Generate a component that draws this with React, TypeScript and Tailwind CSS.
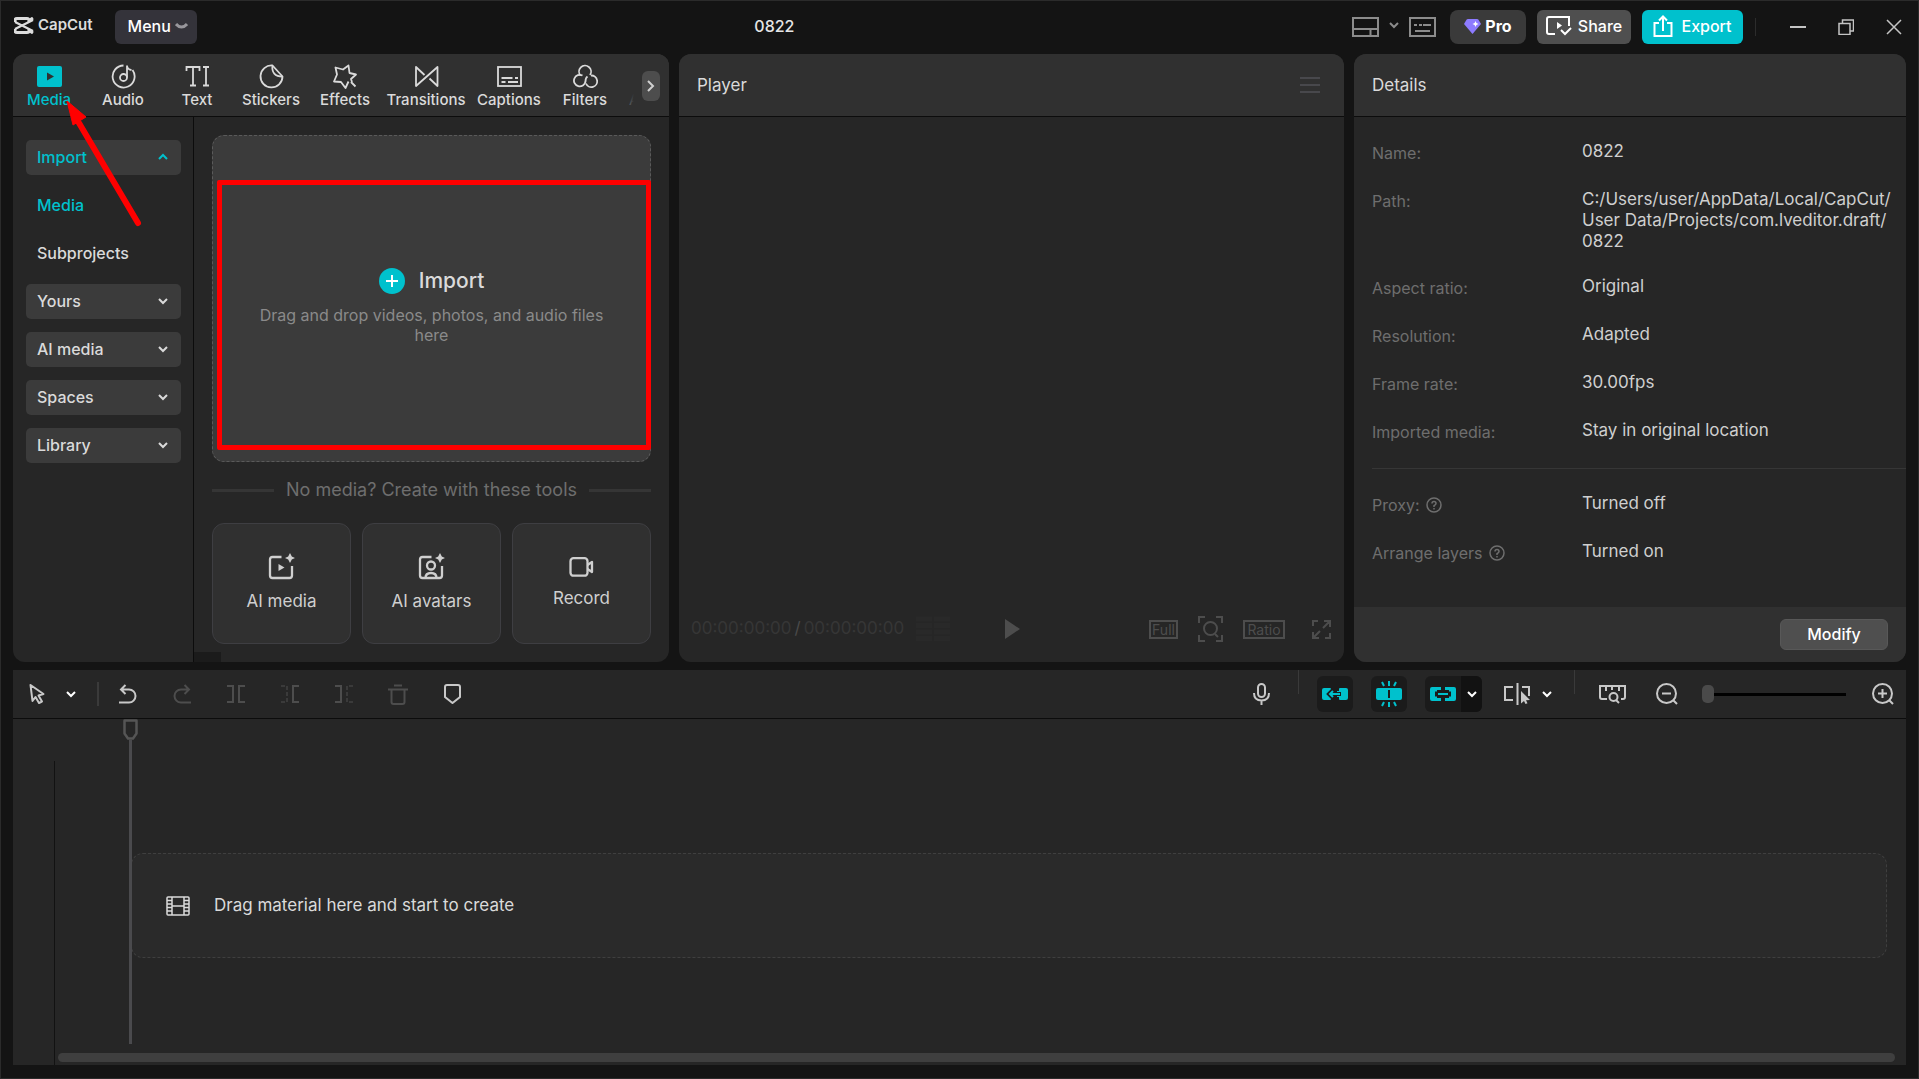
import React, { useState } from 'react';

type IconProps = { w?: number; h?: number; sw?: number; className?: string; children: React.ReactNode };

const Icon = ({ w = 24, h = 24, sw = 2, className = '', children }: IconProps) => (
  <svg
    width={w}
    height={h}
    viewBox={`0 0 ${w} ${h}`}
    fill="none"
    stroke="currentColor"
    strokeWidth={sw}
    className={`shrink-0 ${className}`}
    aria-hidden="true"
  >
    {children}
  </svg>
);

const Chevron = ({ up = false, className = '' }: { up?: boolean; className?: string }) => (
  <Icon w={12} h={8} className={className}>
    <path d={up ? 'M2 6l4-4 4 4' : 'M2 2l4 4 4-4'} />
  </Icon>
);

const tabs = [
  {
    name: 'Media',
    width: 'w-[60px]',
    icon: (
      <>
        <rect x="0" y="2" width="25" height="21" rx="2" fill="currentColor" stroke="none" />
        <path d="M10 8.500v8l7-4z" fill="#303030" stroke="none" />
      </>
    ),
  },
  {
    name: 'Audio',
    width: 'w-[60px]',
    icon: (
      <>
        <path d="M12.500 1.500A11 11 0 1 0 21.500 6" />
        <circle cx="12.500" cy="13.500" r="3.500" />
        <path d="M16 13.500V1.500c0 3 1.500 4 4.500 4.500" />
      </>
    ),
  },
  {
    name: 'Text',
    width: 'w-[60px]',
    icon: (
      <>
        <path d="M1.500 7V3h13v4M8 3v18.500M5 21.500h6" />
        <path d="M18 3h6M21 3v18.500M18 21.500h6" />
      </>
    ),
  },
  {
    name: 'Stickers',
    width: 'w-[60px]',
    icon: (
      <>
        <path d="M13.500 1.500A11 11 0 1 0 23.500 12.500z" strokeLinejoin="round" />
        <path d="M13.500 1.500c-1 7 2.500 11 10 11" />
      </>
    ),
  },
  {
    name: 'Effects',
    width: 'w-[60px]',
    icon: (
      <path
        d="M19 18l-1-3 5-4.500-6.500-1.500L15.500 1.500l-5.500 4-7.500-2 1.500 7-3 7 7 .5 4.500 6 3-6.500M18 18l4.500 4.500"
        strokeLinejoin="round"
      />
    ),
  },
  {
    name: 'Transitions',
    width: 'w-[74px]',
    icon: <path d="M15.500 14.500L23.500 22V3L2 22V3l8.500 8" strokeLinejoin="round" />,
  },
  {
    name: 'Captions',
    width: 'w-16',
    icon: (
      <>
        <rect x="1" y="3" width="23" height="19" />
        <path d="M4.500 14h11M18 14h3M4.500 18h4M11 18h10" />
      </>
    ),
  },
  {
    name: 'Filters',
    width: 'w-[60px]',
    icon: (
      <>
        <path d="M7.500 11.500A6 6 0 1 1 17 11" />
        <path d="M9.500 11.500A5.800 5.800 0 1 0 12.500 17.500c0-3 .5-4 2-5" />
        <path d="M18 11.500a5.800 5.800 0 1 1-5 8" />
      </>
    ),
  },
];

const groups = ['Yours', 'AI media', 'Spaces', 'Library'];

const sparkle = 'M22 0l1.800 3.400L27 5l-3.200 1.600L22 10l-1.800-3.400L17 5l3.200-1.600z';

const tools = [
  {
    name: 'AI media',
    icon: (
      <>
        <path d="M13.500 4H4.500Q2 4 2 6.500v16Q2 25 4.500 25h17q2.500 0 2.500-2.500V13" />
        <path d="M10.500 11v7l6-3.500z" fill="currentColor" stroke="none" />
        <path d={sparkle} fill="currentColor" stroke="none" />
      </>
    ),
  },
  {
    name: 'AI avatars',
    icon: (
      <>
        <path d="M13.500 4H4.500Q2 4 2 6.500v16Q2 25 4.500 25h17q2.500 0 2.500-2.500V13" />
        <circle cx="13" cy="12.500" r="4" />
        <path d="M7.500 25c0-3 1.500-5 5.500-5s5.500 2 5.500 5" />
        <path d={sparkle} fill="currentColor" stroke="none" />
      </>
    ),
  },
];

const details = [
  ['Name:', '0822'],
  ['Path:', 'C:/Users/user/AppData/Local/CapCut/\nUser Data/Projects/com.lveditor.draft/\n0822'],
  ['Aspect ratio:', 'Original'],
  ['Resolution:', 'Adapted'],
  ['Frame rate:', '30.00fps'],
  ['Imported media:', 'Stay in original location'],
];

const extras = [
  ['Proxy:', 'Turned off'],
  ['Arrange layers', 'Turned on'],
];

const Header = () => (
  <header className="flex h-[53px] shrink-0 items-start pt-[9px] pl-[13px] pr-4">
    <div className="flex h-[31px] items-center gap-1 text-[#dcdcdc]">
      <Icon w={20} h={17} sw={3}>
        <path d="M1 5V3.500Q1 1.500 3 1.500h10q2 0 2 2L19 1M1 12v1.500q0 2 2 2h10q2 0 2-2l4 2.500" />
        <path d="M1 5l18 9M1 12l18-9" strokeWidth="2.200" />
      </Icon>
      <span className="text-[15px] font-semibold">CapCut</span>
    </div>
    <button className="ml-[22px] flex h-[34px] items-center gap-1 rounded-md bg-[#34333a] pb-[2px] pl-[13px] pr-[9px] text-base font-medium text-white">
      Menu
      <Icon w={13} h={8} sw={3} className="text-[#98979c]">
        <path d="M1 2q5.500 6 11 0" />
      </Icon>
    </button>
    <h1 className="flex-1 pt-[6px] text-center text-base leading-[21px] font-medium text-[#e6e6e6]">0822</h1>
    <div className="flex h-[34px] items-center">
      <button aria-label="Layout" className="flex items-center gap-[9px] text-[#8c8c8c]">
        <Icon w={27} h={20}>
          <path d="M1 1h25v18H1zM1 12h25M18.500 12v7" />
        </Icon>
        <Chevron className="mb-1" />
      </button>
      <button aria-label="Shortcuts" className="ml-[9px] text-[#8c8c8c]">
        <Icon w={27} h={20}>
          <path d="M1 1h25v18H1zM5 8h3M10 8h3M14 8h8M6 14h15" />
        </Icon>
      </button>
      <button className="ml-[14px] flex h-[34px] w-[76px] items-center justify-center gap-1 rounded-lg bg-[#3a3a3a] pb-[2px] text-base font-bold text-white">
        <svg width="17" height="15" viewBox="0 0 17 15" aria-hidden="true">
          <path d="M4 0h9q1 0 1.500.8L17 5 8.500 15 0 5 2.500.8Q3 0 4 0z" fill="#8d7bff" />
          <path d="M11.500 2l.9 2.100 2.100.9-2.100.9-.9 2.100-.9-2.100-2.100-.9 2.100-.9z" fill="#fff" />
        </svg>
        Pro
      </button>
      <button className="ml-[11px] flex h-[34px] w-[94px] items-center justify-center gap-[6px] rounded-md bg-[#4f4f4f] pb-[2px] text-base font-medium text-white">
        <Icon w={26} h={20}>
          <path d="M9 18H3q-2 0-2-2V3q0-2 2-2h20v9" />
          <path d="M11 6v7l5-3.500z" fill="currentColor" stroke="none" />
          <path d="M15 14l4 4 6-6" />
        </Icon>
        Share
      </button>
      <button className="ml-[11px] flex h-[34px] w-[101px] items-center justify-center gap-2 rounded-md bg-[#00c1cd] pb-[2px] text-base font-medium text-white">
        <Icon w={20} h={22}>
          <path d="M6 8H1.500v13h17V8H14M10 16V2M6 5.500l4-4 4 4" />
        </Icon>
        Export
      </button>
      <span className="ml-3 h-[18px] w-px bg-[#2c2c2c]" />
      <button aria-label="Minimize" className="ml-[34px] text-[#c4c4c4]">
        <Icon w={16} h={16} sw={2}>
          <path d="M0 8h16" />
        </Icon>
      </button>
      <button aria-label="Restore" className="ml-8 text-[#c4c4c4]">
        <Icon w={16} h={16} sw={1.5}>
          <path d="M1 4.500h11v11H1zM4.500 4V1h11v11H12" />
        </Icon>
      </button>
      <button aria-label="Close" className="ml-8 text-[#c4c4c4]">
        <Icon w={16} h={16} sw={1.5}>
          <path d="M1 1l14 14M15 1L1 15" />
        </Icon>
      </button>
    </div>
  </header>
);

const MediaPanel = () => {
  const [active, setActive] = useState('Media');

  return (
    <section className="flex min-w-0 flex-[656] flex-col overflow-hidden rounded-xl bg-[#262626]">
      <nav className="relative flex h-[63px] shrink-0 gap-[14px] border-b border-[#0c0c0c] bg-[#303030] pl-[6px] pt-[10px]">
        {tabs.map((tab) => (
          <button
            key={tab.name}
            onClick={() => setActive(tab.name)}
            className={`flex shrink-0 flex-col items-center gap-px text-[15px] leading-5 font-medium ${tab.width} ${
              active === tab.name ? 'text-[#00c1cd]' : 'text-[#dadada]'
            }`}
          >
            <Icon w={25} h={25} sw={1.8}>{tab.icon}</Icon>
            {tab.name}
          </button>
        ))}
        <span className="pt-[26px] text-[15px] leading-5 text-[#8a8a8a]">A</span>
        {/* fade over the tab that runs under the scroll button */}
        <div className="absolute bottom-0 right-0 top-0 flex w-[44px] items-start justify-end bg-linear-to-r from-transparent to-[#303030] to-20% pr-[9px] pt-[17px]">
          <button
            aria-label="More tabs"
            className="flex h-[30px] w-[18px] items-center justify-center rounded-md bg-[#4d4d4d] text-[#d0d0d0]"
          >
            <Icon w={8} h={12}>
              <path d="M1 1l5 5-5 5" />
            </Icon>
          </button>
        </div>
      </nav>

      <div className="flex min-h-0 flex-1">
        <aside className="flex w-[181px] shrink-0 flex-col gap-[13px] border-r border-[#0c0c0c] pl-[13px] pr-3 pt-[23px] text-base font-medium text-[#dadada]">
          <button className="flex h-[35px] items-center justify-between rounded-[5px] bg-[#3b3b3b] pb-[2px] pl-[11px] pr-3 text-[#00c1cd]">
            Import
            <Chevron up />
          </button>
          <button className="h-[35px] pb-[2px] pl-[11px] text-left text-[#00c1cd]">Media</button>
          <button className="h-[35px] pb-[2px] pl-[11px] text-left">Subprojects</button>
          {groups.map((name) => (
            <button
              key={name}
              className="flex h-[35px] items-center justify-between rounded-[5px] bg-[#3b3b3b] pb-[2px] pl-[11px] pr-3"
            >
              {name}
              <Chevron />
            </button>
          ))}
        </aside>

        <div className="flex min-w-0 flex-1 flex-col pl-[18px] pt-[18px]">
          <div className="relative mr-[18px] flex h-[327px] shrink-0 flex-col items-center justify-center rounded-xl border border-dashed border-[#5a5a5a] bg-[#3b3b3b] pt-[14px] text-center">
            <button className="flex items-center gap-[14px] text-[21px] font-medium leading-[28px] text-[#dadada]">
              <svg width="26" height="26" viewBox="0 0 26 26" aria-hidden="true">
                <circle cx="13" cy="13" r="13" fill="#00c1cd" />
                <path d="M13 7v12M7 13h12" stroke="#fff" strokeWidth="2" />
              </svg>
              Import
            </button>
            <p className="mt-[10px] w-[360px] text-base leading-5 text-[#8a8a8a]">
              Drag and drop videos, photos, and audio files here
            </p>
            <div className="absolute -right-px bottom-[11px] left-1 top-11 rounded-[2px] border-[5px] border-[#ff0000]" />
          </div>

          <div className="mr-[18px] mt-[15px] flex items-center gap-3 text-lg leading-[26px] text-[#6e6e6e]">
            <span className="h-[3px] flex-1 bg-[#353535]" />
            No media? Create with these tools
            <span className="h-[3px] flex-1 bg-[#353535]" />
          </div>

          <div className="mr-[18px] mt-5 grid grid-cols-3 gap-[11px] text-[17px] leading-6 text-[#cfcfcf]">
            {tools.map((tool) => (
              <button
                key={tool.name}
                className="flex h-[121px] flex-col items-center gap-[9px] rounded-xl border border-[#3e3e42] bg-[#303030] pt-[29px]"
              >
                <Icon w={27} h={27} sw={2.3}>{tool.icon}</Icon>
                {tool.name}
              </button>
            ))}
            <button className="flex h-[121px] flex-col items-center gap-[9px] rounded-xl border border-[#3e3e42] bg-[#303030] pt-[33px]">
              <Icon w={25} h={20} sw={2.3}>
                <rect x="1.500" y="1.200" width="17" height="17.500" rx="3" />
                <path d="M18.500 8l4.500-3v10l-4.500-3" strokeLinejoin="round" />
              </Icon>
              Record
            </button>
          </div>
          <span className="-ml-[18px] mt-auto h-[10px] w-[27px] bg-[#1b1b1b]" />
        </div>
      </div>
    </section>
  );
};

const Player = () => (
  <section className="flex min-w-0 flex-[665] flex-col overflow-hidden rounded-xl bg-[#262626]">
    <div className="flex h-[63px] shrink-0 items-center justify-between border-b border-[#0c0c0c] bg-[#303030] pl-[18px] pr-6">
      <h2 className="pt-[2px] text-[17px] text-[#dadada]">Player</h2>
      <button aria-label="Player menu" className="text-[#48484c]">
        <Icon w={20} h={18}>
          <path d="M0 2h20M0 9h20M0 16h20" />
        </Icon>
      </button>
    </div>
    <div className="flex-1" />
    <div className="flex h-[66px] shrink-0 items-center pl-[12px] pr-[13px] text-[17px] text-[#363636]">
      <span>00:00:00:00</span>
      <span className="mx-[3px] text-[#4a4a4a]">/</span>
      <span>00:00:00:00</span>
      <Icon w={34} h={26} sw={5} className="ml-3 text-[#292929]">
        <path d="M0 3h16M18 3h16M0 9.500h16M18 9.500h16M0 16h16M18 16h16M0 22.500h16M18 22.500h16" />
      </Icon>
      <button aria-label="Play" className="ml-auto text-[#4d4d4d]">
        <Icon w={15} h={20}>
          <path d="M0 0l15 10-15 10z" fill="currentColor" stroke="none" />
        </Icon>
      </button>
      <div className="ml-[129px] flex items-center text-[#4d4d4d]">
        <button className="h-[19px] w-[29px] border-2 border-[#4d4d4d] text-sm leading-[15px]">Full</button>
        <button aria-label="Zoom to fit" className="ml-5">
          <Icon w={25} h={26}>
            <path d="M1 7V1h6M18 1h6v6M24 19v6h-6M7 25H1v-6M17 18l3 3" />
            <circle cx="12.500" cy="12.500" r="6.500" />
          </Icon>
        </button>
        <button className="ml-5 h-[19px] w-[42px] border-2 border-[#4d4d4d] text-sm leading-[15px]">Ratio</button>
        <button aria-label="Full screen" className="ml-[27px]">
          <Icon w={19} h={19}>
            <path d="M1 6V1h5M13 18h5v-5M11 8l7-7M12 1h6v6M8 11l-7 7M1 12v6h6" />
          </Icon>
        </button>
      </div>
    </div>
  </section>
);

const Details = () => (
  <section className="flex min-w-0 flex-[552] flex-col overflow-hidden rounded-xl bg-[#262626]">
    <div className="flex h-[63px] shrink-0 items-center border-b border-[#0c0c0c] bg-[#303030] pl-[18px]">
      <h2 className="pt-[2px] text-[17px] text-[#dadada]">Details</h2>
    </div>
    <div className="flex flex-1 flex-col gap-6 pl-[18px] pt-6">
      <dl className="flex flex-col gap-6">
        {details.map(([label, value]) => (
          <div key={label} className="flex min-h-6">
            <dt className="w-[210px] shrink-0 text-base leading-6 text-[#6e6e6e]">{label}</dt>
            <dd className="min-w-0 text-[17px] leading-[21px] whitespace-pre-line text-[#cfcfcf]">{value}</dd>
          </div>
        ))}
      </dl>
      <hr className="border-[#363636]" />
      <dl className="flex flex-col gap-6">
        {extras.map(([label, value]) => (
          <div key={label} className="flex min-h-6">
            <dt className="flex w-[210px] shrink-0 items-center gap-[6px] text-base leading-6 text-[#6e6e6e]">
              {label}
              <Icon w={16} h={16} sw={1.5}>
                <circle cx="8" cy="8" r="7" />
                <path d="M6 6.500q0-2 2-2t2 2q0 1-2 2.200V10M8 11v1.500" />
              </Icon>
            </dt>
            <dd className="text-[17px] leading-[21px] text-[#cfcfcf]">{value}</dd>
          </div>
        ))}
      </dl>
    </div>
    <div className="flex h-[55px] shrink-0 items-center justify-end bg-[#303030] pr-[18px]">
      <button className="h-[31px] w-[108px] rounded-md border border-[#585858] bg-[#4f4f4f] pb-px text-base font-medium text-white">
        Modify
      </button>
    </div>
  </section>
);

const ToolBar = () => (
  <div className="flex h-[49px] shrink-0 items-center border-b border-[#0c0c0c] pl-4 pr-3 text-[#c8c8c8]">
    <button aria-label="Select" className="flex items-center gap-[19px]">
      <Icon w={17} h={22}>
        <path d="M1.500 2l13 9-5 1.500 3.500 6-3 1.500-3.500-6-3 4z" strokeLinejoin="round" />
      </Icon>
      <Chevron className="text-white" />
    </button>
    <span className="ml-[20px] h-6 w-[2px] bg-[#3a3a3a]" />
    <button aria-label="Undo" className="ml-[20px]">
      <Icon w={18} h={20}>
        <path d="M0 18.500h10a6.500 6.500 0 0 0 0-13H1.500M6.500 1L2 5.500 6.500 10" />
      </Icon>
    </button>
    <button aria-label="Redo" className="ml-9 text-[#4d4d4d]">
      <Icon w={18} h={20}>
        <path d="M18 18.500H8a6.500 6.500 0 0 1 0-13h8.500M11.500 1L16 5.500 11.500 10" />
      </Icon>
    </button>
    <button aria-label="Split" className="ml-9 text-[#4d4d4d]">
      <Icon w={18} h={18}>
        <path d="M0 1h6v16H0M18 1h-6v16h6" />
      </Icon>
    </button>
    <button aria-label="Delete left" className="ml-9 text-[#4d4d4d]">
      <Icon w={18} h={18}>
        <path d="M0 1h6v16H0" strokeDasharray="4 2" stroke="#3a3a3a" />
        <path d="M18 1h-6v16h6" />
      </Icon>
    </button>
    <button aria-label="Delete right" className="ml-9 text-[#4d4d4d]">
      <Icon w={18} h={18}>
        <path d="M18 1h-6v16h6" strokeDasharray="4 2" stroke="#3a3a3a" />
        <path d="M0 1h6v16H0" />
      </Icon>
    </button>
    <button aria-label="Delete" className="ml-[35px] text-[#4d4d4d]">
      <Icon w={20} h={21}>
        <path d="M6 1.500h8M0 5.500h20M3.500 6v12q0 2 2 2h9q2 0 2-2V6" />
      </Icon>
    </button>
    <button aria-label="Marker" className="ml-9">
      <Icon w={17} h={20}>
        <path d="M3 1h11q2 0 2 2v10l-7.500 6L1 13V3q0-2 2-2z" />
      </Icon>
    </button>

    <div className="ml-auto flex items-center">
      <button aria-label="Record voiceover">
        <Icon w={17} h={22}>
          <rect x="5" y="1" width="7" height="13" rx="3.500" />
          <path d="M1 10q0 7.500 7.500 7.500T16 10M8.500 17.500V22" />
        </Icon>
      </button>
      <span className="mb-6 ml-7 h-6 w-px bg-[#3a3a3a]" />
      <button aria-label="Main track magnet" className="ml-[18px] flex size-9 items-center justify-center rounded-md bg-[#1b1b1b] text-[#00c1cd]">
        <Icon w={26} h={14}>
          <path
            d="M2 1h6q1 0 1 1v2h2v6H9v2q0 1-1 1H2q-2 0-2-2V3q0-2 2-2zM24 1h-6q-1 0-1 1v2h-2v6h2v2q0 1 1 1h6q2 0 2-2V3q0-2-2-2z"
            fill="currentColor"
            stroke="none"
          />
          <path d="M7 7h12M11 3L7 7l4 4" stroke="#1b1b1b" strokeWidth="4" />
          <path d="M8 7h10M11 4L8 7l3 3" strokeWidth="2" />
        </Icon>
      </button>
      <button aria-label="Auto snapping" className="ml-[18px] flex size-9 items-center justify-center rounded-md bg-[#1b1b1b] text-[#00c1cd]">
        <Icon w={26} h={26}>
          <rect x="0" y="7" width="26" height="12" rx="2" fill="currentColor" stroke="none" />
          <path d="M13 9v8" stroke="#1b1b1b" />
          <path d="M13 0v5M6 1l2 4M20 1l-2 4M13 21v5M6 25l2-4M20 25l-2-4" />
        </Icon>
      </button>
      <div className="ml-[18px] flex overflow-hidden rounded-md bg-[#1b1b1b]">
        <button aria-label="Linkage" className="flex size-9 items-center justify-center text-[#00c1cd]">
          <Icon w={26} h={14}>
            <path
              d="M2 0h9v3H7v8h4v3H2q-2 0-2-2V2q0-2 2-2zM24 0h-9v3h4v8h-4v3h9q2 0 2-2V2q0-2-2-2z"
              fill="currentColor"
              stroke="none"
            />
            <path d="M5 7h16" stroke="#1b1b1b" strokeWidth="5" />
            <path d="M8 7h10" />
          </Icon>
        </button>
        <button aria-label="Linkage options" className="flex w-[21px] items-center justify-center bg-[#121212] text-white">
          <Chevron />
        </button>
      </div>
      <button aria-label="Preview axis" className="ml-[22px] flex items-center gap-[10px]">
        <Icon w={27} h={24}>
          <path d="M9 5H1v13h8M13.500 1v22M18 5h7v9" />
          <path d="M17 9l9 9-4 .2 1.500 3-2 .8-1.500-3-3 2.500z" fill="currentColor" stroke="none" />
        </Icon>
        <Chevron className="text-white" />
      </button>
      <span className="mb-6 ml-[21px] h-6 w-px bg-[#3a3a3a]" />
      <button aria-label="Fit timeline" className="ml-6">
        <Icon w={27} h={20}>
          <path d="M8 15H3q-2 0-2-2V2h25v11q0 2-2 2h-2M7 2v5M13 2v4M20 2v5" />
          <circle cx="14.500" cy="13" r="4" />
          <path d="M17 16l3 3" />
        </Icon>
      </button>
      <button aria-label="Zoom out" className="ml-[30px]">
        <Icon w={22} h={22}>
          <circle cx="10.500" cy="10.500" r="9.500" />
          <path d="M6 10.500h9M17 17l4 4" />
        </Icon>
      </button>
      <input
        type="range"
        aria-label="Timeline zoom"
        defaultValue={0}
        className="ml-6 h-[18px] w-36 appearance-none bg-transparent [&::-webkit-slider-runnable-track]:h-[3px] [&::-webkit-slider-runnable-track]:bg-black [&::-webkit-slider-thumb]:-mt-2 [&::-webkit-slider-thumb]:h-[18px] [&::-webkit-slider-thumb]:w-3 [&::-webkit-slider-thumb]:appearance-none [&::-webkit-slider-thumb]:rounded-[5px] [&::-webkit-slider-thumb]:bg-[#4a4a4a]"
      />
      <button aria-label="Zoom in" className="ml-[26px]">
        <Icon w={22} h={22}>
          <circle cx="10.500" cy="10.500" r="9.500" />
          <path d="M6 10.500h9M10.500 6v9M17 17l4 4" />
        </Icon>
      </button>
    </div>
  </div>
);

const Timeline = () => (
  <section className="flex min-h-0 flex-[395] flex-col bg-[#262626]">
    <ToolBar />
    <div className="flex min-h-0 flex-1">
      <div className="mt-[42px] w-[42px] shrink-0 border-r border-[#121212]" />
      <div className="relative flex min-w-0 flex-1 flex-col pr-[11px]">
        <div className="ml-[76px] mr-2 mt-[134px] flex h-[105px] shrink-0 items-center gap-6 rounded-xl border border-dashed border-[#3f3f3f] bg-[#2a2a2a] pl-[34px] text-[17px] text-[#dadada]">
          <Icon w={24} h={20} sw={1.5}>
            <rect x="1" y="1" width="22" height="18" rx="1" />
            <path d="M6 1v18M18 1v18M6 10h12M1 4.500h5M1 8h5M1 11.500h5M1 15h5M18 4.500h5M18 8h5M18 11.500h5M18 15h5" />
          </Icon>
          Drag material here and start to create
        </div>
        <div className="mb-[3px] ml-[3px] mt-auto h-[9px] rounded-full bg-[#3f3f3f]" />
        {/* playhead */}
        <div className="absolute bottom-[21px] left-[68px] top-0 flex w-[15px] flex-col items-center text-[#555]">
          <Icon w={15} h={21} sw={2.5}>
            <path d="M1.500 1.500h12v13l-3.500 5h-5l-3.500-5z" strokeLinejoin="round" />
          </Icon>
          <span className="w-[3px] flex-1 bg-[#4a4a4d]" />
        </div>
      </div>
    </div>
  </section>
);

export default function App() {
  return (
    <div className="relative flex h-screen flex-col border border-[#2b2b2b] bg-[#141414] font-['Inter','Noto_Sans',sans-serif]">
      <Header />
      <main className="flex min-h-0 flex-1 flex-col gap-2 px-3 pb-[13px]">
        <div className="flex min-h-0 flex-[608] gap-[10px]">
          <MediaPanel />
          <Player />
          <Details />
        </div>
        <Timeline />
      </main>
      {/* pointer to the Media tab */}
      <svg className="pointer-events-none absolute left-[60px] top-[98px]" width="90" height="132" viewBox="0 0 90 132" aria-hidden="true">
        <path d="M77 124L18 24" stroke="#f00" strokeWidth="6" strokeLinecap="round" />
        <path d="M6 2l19 16-13 8z" fill="#f00" stroke="#f00" />
      </svg>
    </div>
  );
}
